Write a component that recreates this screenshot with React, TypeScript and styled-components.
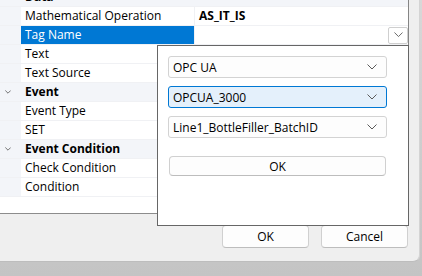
import React from 'react';
import styled, { createGlobalStyle } from 'styled-components';

const GlobalStyle = createGlobalStyle`
  html, body {
    margin: 0;
    padding: 0;
  }
  body {
    font-family: "Open Sans", "Noto Sans", sans-serif;
    font-size: 12px;
    color: #000;
  }
`;

const Screen = styled.div`
  position: relative;
  width: 422px;
  height: 276px;
  overflow: hidden;
  background: linear-gradient(#d8d8d8, #c4c4c4);
`;

const Dialog = styled.div`
  width: 420px;
  height: 262px;
  background-color: #efefef;
  border-bottom-right-radius: 7px;
  border-bottom: 1px solid #bdbdbd;
  border-right: 1px solid #d4d4d4;
  box-sizing: border-box;
  display: flex;
  flex-direction: column;
`;

const Grid = styled.div`
  width: 409px;
  height: 214px;
  box-sizing: border-box;
  background-color: #fff;
  border-right: 1px solid #858585;
  border-bottom: 1px solid #8c8c8c;
  overflow: hidden;
`;

const GridBody = styled.div`
  margin-top: -12px;
`;

const Row = styled.div<{ $category?: boolean }>`
  display: flex;
  height: 18px;
  border-bottom: 1px solid #f0f1f4;
  background-color: ${p => (p.$category ? '#f3f5f9' : '#fff')};
  line-height: 18px;
`;

const Margin = styled.div`
  width: 21px;
  flex: none;
  display: flex;
  align-items: center;
  justify-content: center;
  padding-right: 5px;
  box-sizing: border-box;
  background-color: #f3f5f9;
`;

const Name = styled.div<{ $selected?: boolean; $category?: boolean }>`
  width: 173px;
  flex: none;
  padding-left: 4px;
  box-sizing: border-box;
  white-space: nowrap;
  overflow: hidden;
  font-weight: ${p => (p.$category ? 700 : 400)};
  color: ${p => (p.$selected ? '#fff' : '#000')};
  background-color: ${p => (p.$selected ? '#0078d4' : p.$category ? 'transparent' : '#fff')};
`;

const Value = styled.div`
  flex: 1;
  display: flex;
  align-items: center;
  padding-left: 4px;
  border-left: 1px solid #f0f1f4;
  font-weight: 700;
  white-space: nowrap;
`;

const DropButton = styled.div`
  margin-left: auto;
  width: 20px;
  height: 17px;
  box-sizing: border-box;
  border: 1px solid #cfcfcf;
  border-radius: 2px;
  background-color: #fff;
  display: flex;
  align-items: center;
  justify-content: center;
`;

const ButtonBar = styled.div`
  display: flex;
  justify-content: flex-end;
  gap: 12px;
  padding: 11px 11px 0 0;
`;

const Button = styled.button<{ $width?: number }>`
  width: ${p => p.$width ?? 87}px;
  height: 23px;
  box-sizing: border-box;
  border: 1px solid #d0d0d0;
  border-bottom-color: #bdbdbd;
  border-radius: 4px;
  background-color: #fdfdfd;
  font: inherit;
  color: #000;
  padding: 0;
`;

const Popup = styled.div`
  position: absolute;
  left: 157px;
  top: 45px;
  width: 252px;
  height: 181px;
  box-sizing: border-box;
  border: 1px solid #666;
  background-color: #fff;
  padding: 10px 0 0 10px;
  display: flex;
  flex-direction: column;
  gap: 8px;
`;

const Combo = styled.div<{ $active?: boolean }>`
  width: 219px;
  height: 22px;
  box-sizing: border-box;
  border: 1px solid ${p => (p.$active ? '#0078d4' : '#d3d3d3')};
  border-radius: 3px;
  background-color: ${p => (p.$active ? '#e4f0fb' : '#fdfdfd')};
  display: flex;
  align-items: center;
  padding: 0 9px 0 4px;
  white-space: nowrap;
`;

const ComboText = styled.span`
  flex: 1;
`;

const PopupButton = styled(Button)`
  width: 217px;
  height: 20px;
  margin: 10px 0 0 1px;
`;

const Chevron = ({ size = 10 }: { size?: number }) => (
  <svg width={size} height={size / 2 + 1} viewBox="0 0 10 6">
    <polyline points="0.5,0.5 5,5 9.5,0.5" fill="none" stroke="#5a5a5a" strokeWidth={size < 8 ? 1.4 : 1} />
  </svg>
);

type Item = { name: string; value?: string; category?: boolean; selected?: boolean; drop?: boolean };

const items: Item[] = [
  { name: 'Data', category: true },
  { name: 'Mathematical Operation', value: 'AS_IT_IS' },
  { name: 'Tag Name', selected: true, drop: true },
  { name: 'Text' },
  { name: 'Text Source' },
  { name: 'Event', category: true },
  { name: 'Event Type' },
  { name: 'SET' },
  { name: 'Event Condition', category: true },
  { name: 'Check Condition' },
  { name: 'Condition' },
];

const App = () => {
  return (
    <React.Fragment>
      <GlobalStyle />
      <Screen>
        <Dialog>
          <Grid>
            <GridBody>
              {items.map(it => (
                <Row key={it.name} $category={it.category}>
                  <Margin>{it.category && <Chevron size={6} />}</Margin>
                  <Name $selected={it.selected} $category={it.category}>{it.name}</Name>
                  {!it.category && (
                    <Value>
                      {it.value}
                      {it.drop && (
                        <DropButton>
                          <Chevron size={9} />
                        </DropButton>
                      )}
                    </Value>
                  )}
                </Row>
              ))}
            </GridBody>
          </Grid>
          <ButtonBar>
            <Button>OK</Button>
            <Button>Cancel</Button>
          </ButtonBar>
        </Dialog>
        <Popup>
          <Combo>
            <ComboText>OPC UA</ComboText>
            <Chevron />
          </Combo>
          <Combo $active>
            <ComboText>OPCUA_3000</ComboText>
            <Chevron />
          </Combo>
          <Combo>
            <ComboText>Line1_BottleFiller_BatchID</ComboText>
            <Chevron />
          </Combo>
          <PopupButton>OK</PopupButton>
        </Popup>
      </Screen>
    </React.Fragment>
  );
};

export default App;
